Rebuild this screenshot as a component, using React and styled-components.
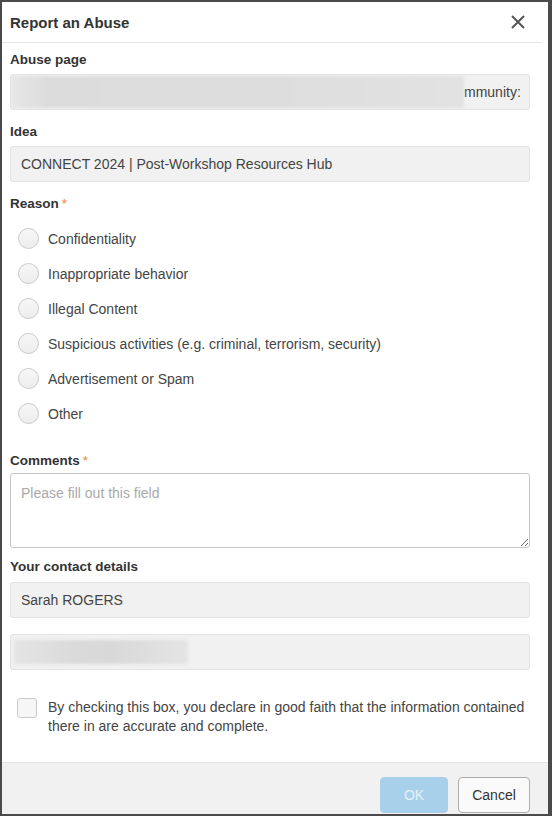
import React from "react";
import styled, { createGlobalStyle } from "styled-components";

const Global = createGlobalStyle`
  html, body { margin: 0; padding: 0; }
  body { font-family: "Liberation Sans", Arial, sans-serif; background: #4a4a4a; }
  * { box-sizing: border-box; }
`;

const Frame = styled.div`
  width: 552px;
  height: 816px;
  border-style: solid;
  border-color: #4a4a4a;
  border-width: 2px 4px 2px 2px;
  background: #fff;
  display: flex;
  flex-direction: column;
`;

const Header = styled.div`
  height: 41px;
  flex: none;
  display: flex;
  align-items: center;
  justify-content: space-between;
  padding: 0 18px 0 8px;
  border-bottom: 1px solid #e6e6e6;
  margin-right: 6px;
`;

const Title = styled.h1`
  margin: 0;
  font-size: 15px;
  font-weight: bold;
  color: #333;
`;

const Close = styled.button`
  border: 0;
  background: none;
  padding: 0;
  width: 16px;
  height: 16px;
  display: flex;
  cursor: pointer;
  margin-right: -2px;
`;

const Body = styled.div`
  flex: 1;
  padding: 8px 18px 0 8px;
  display: flex;
  flex-direction: column;
`;

const Label = styled.div`
  font-size: 13.5px;
  font-weight: bold;
  color: #333;
  line-height: 18px;
  margin-top: ${(p) => p.$mt || 0}px;
  margin-bottom: ${(p) => (p.$mb == null ? 5 : p.$mb)}px;
`;

const Star = styled.span`
  color: #e8862a;
  font-weight: normal;
  margin-left: 3px;
`;

const Field = styled.div`
  height: 36px;
  background: #f1f1f1;
  border: 1px solid #e3e3e3;
  border-radius: 3px;
  display: flex;
  align-items: center;
  justify-content: ${(p) => p.$justify || "flex-start"};
  padding: 0 ${(p) => (p.$pad == null ? 10 : p.$pad)}px;
  font-size: 14px;
  color: #444;
  overflow: hidden;
  margin-top: ${(p) => p.$mt || 0}px;
`;

const Blur = styled.div`
  width: ${(p) => p.$w}px;
  height: ${(p) => p.$h}px;
  flex: none;
  background: ${(p) => p.$bg};
  filter: blur(1.5px);
`;

const RadioList = styled.div`
  margin-top: 8px;
  display: flex;
  flex-direction: column;
`;

const RadioRow = styled.label`
  height: 35px;
  display: flex;
  align-items: center;
  padding-left: 8px;
  gap: 9px;
  font-size: 14px;
  color: #444;
`;

const RadioCircle = styled.span`
  width: 21px;
  height: 21px;
  border-radius: 50%;
  border: 1px solid #c9c9c9;
  background: linear-gradient(#f7f7f7, #ededed);
  flex: none;
`;

const TextArea = styled.textarea`
  display: block;
  width: 100%;
  height: 75px;
  border: 1px solid #c6c6c6;
  border-radius: 3px;
  padding: 11px 10px;
  font-family: "Liberation Sans", Arial, sans-serif;
  font-size: 14px;
  color: #444;
  resize: vertical;
  outline: none;
  &::placeholder { color: #a9a9a9; }
`;

const CheckRow = styled.label`
  margin-top: 28px;
  display: flex;
  align-items: flex-start;
  gap: 11px;
  padding-left: 7px;
  font-size: 14px;
  line-height: 19px;
  color: #444;
`;

const CheckBox = styled.span`
  width: 20px;
  height: 20px;
  flex: none;
  border: 1px solid #c9c9c9;
  border-radius: 3px;
  background: #f6f6f6;
`;

const Footer = styled.div`
  flex: none;
  height: 52px;
  background: #f1f1f1;
  border-top: 1px solid #e3e3e3;
  display: flex;
  justify-content: flex-end;
  align-items: flex-start;
  gap: 10px;
  padding: 14px 18px 0 0;
`;

const Button = styled.button`
  height: 36px;
  padding: 0;
  width: ${(p) => p.$w}px;
  border-radius: 4px;
  font-family: "Liberation Sans", Arial, sans-serif;
  font-size: 14px;
  border: 1px solid ${(p) => (p.$primary ? "#a9d0ea" : "#adadad")};
  background: ${(p) => (p.$primary ? "#a9d0ea" : "#fafafa")};
  color: ${(p) => (p.$primary ? "#e4f1fa" : "#333")};
`;

const reasons = [
  "Confidentiality",
  "Inappropriate behavior",
  "Illegal Content",
  "Suspicious activities (e.g. criminal, terrorism, security)",
  "Advertisement or Spam",
  "Other",
];

export default function App() {
  return (
    <>
      <Global />
      <Frame>
        <Header>
          <Title>Report an Abuse</Title>
          <Close aria-label="Close">
            <svg width="16" height="16" viewBox="0 0 16 16">
              <path d="M2 2 L14 14 M14 2 L2 14" stroke="#555" strokeWidth="2" fill="none" />
            </svg>
          </Close>
        </Header>
        <Body>
          <Label>Abuse page</Label>
          <Field $justify="space-between" $pad={0}>
            <Blur
              $w={453}
              $h={32}
              $bg="linear-gradient(90deg, #e6e6e6 0%, #dcdcdc 8%, #dddddd 60%, #e2e2e2 100%)"
            />
            <span style={{ paddingRight: 9 }}>mmunity:</span>
          </Field>

          <Label $mt={13}>Idea</Label>
          <Field>CONNECT 2024 | Post-Workshop Resources Hub</Field>

          <Label $mt={13} $mb={0}>
            Reason<Star>*</Star>
          </Label>
          <RadioList>
            {reasons.map((r) => (
              <RadioRow key={r}>
                <RadioCircle />
                {r}
              </RadioRow>
            ))}
          </RadioList>

          <Label $mt={21} $mb={3}>
            Comments<Star>*</Star>
          </Label>
          <TextArea placeholder="Please fill out this field" />

          <Label $mt={10} $mb={6}>Your contact details</Label>
          <Field>Sarah ROGERS</Field>
          <Field $mt={16} $pad={3}>
            <Blur
              $w={174}
              $h={24}
              $bg="linear-gradient(90deg, #e4e4e4 0%, #dadada 35%, #d8d8d8 55%, #e4e4e4 100%)"
            />
          </Field>

          <CheckRow>
            <CheckBox />
            <span>
              By checking this box, you declare in good faith that the information contained
              there in are accurate and complete.
            </span>
          </CheckRow>
        </Body>
        <Footer>
          <Button $primary $w={68}>OK</Button>
          <Button $w={72}>Cancel</Button>
        </Footer>
      </Frame>
    </>
  );
}
